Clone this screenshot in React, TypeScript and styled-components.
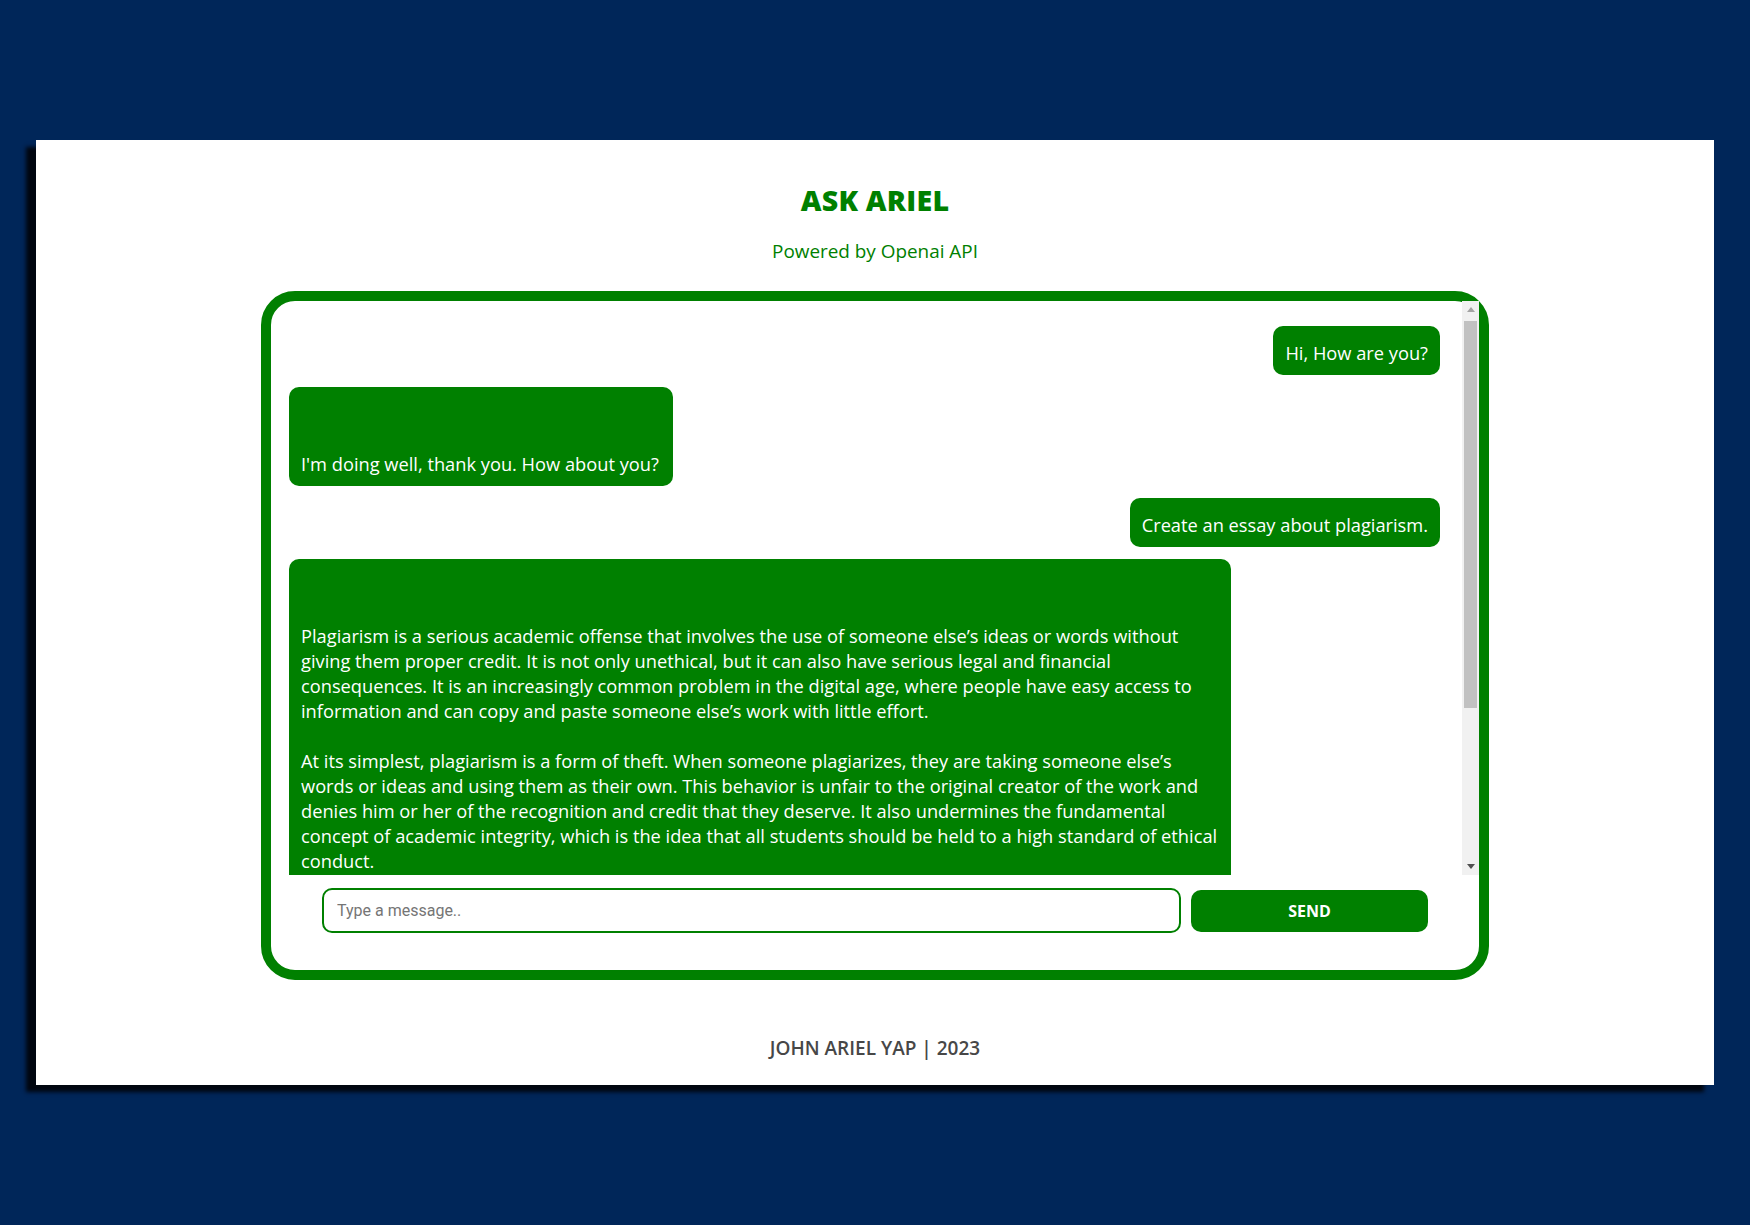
import React, { useCallback, useLayoutEffect, useRef, useState } from "react";
import styled, { createGlobalStyle } from "styled-components";

const GREEN = "#008000";

const GlobalStyle = createGlobalStyle`
  * { box-sizing: border-box; }
  html, body { margin: 0; padding: 0; }
  body {
    background: #002659;
    font-family: "Open Sans", "Noto Sans", sans-serif;
  }
`;

const Page = styled.div`
  min-height: 1225px;
  padding: 140px 36px 0 36px;
`;

const Sheet = styled.main`
  background: #ffffff;
  box-shadow: -10px 7px 4px rgba(0, 4, 12, 0.95);
  display: flex;
  flex-direction: column;
  align-items: center;
  padding: 42px 0 25px 0;
`;

const Title = styled.h1`
  margin: 0;
  font-family: "Open Sans", sans-serif;
  font-weight: 800;
  font-size: 28.6px;
  line-height: 36px;
  color: ${GREEN};
  letter-spacing: 0.2px;
`;

const Subtitle = styled.p`
  margin: 21px 0 0 0;
  font-size: 18.9px;
  line-height: 24px;
  color: ${GREEN};
`;

const ChatBox = styled.section`
  margin-top: 28px;
  width: 1228px;
  height: 689px;
  border: 10px solid ${GREEN};
  border-radius: 34px;
  display: flex;
  flex-direction: column;
`;

const ListRow = styled.div`
  display: flex;
  height: 574px;
  flex: none;
`;

const MessageList = styled.div`
  flex: 1;
  min-width: 0;
  overflow-y: auto;
  display: flex;
  flex-direction: column;
  gap: 12px;
  padding: 25px 22px 12px 18px;
  scrollbar-width: none;
  &::-webkit-scrollbar {
    display: none;
  }
`;

const ScrollTrack = styled.div`
  width: 17px;
  flex: none;
  background: #f1f1f1;
  display: flex;
  flex-direction: column;
`;

const ScrollArrow = styled.div<{ $dir: "up" | "down" }>`
  height: 17px;
  flex: none;
  display: flex;
  align-items: center;
  justify-content: center;
  &::before {
    content: "";
    width: 0;
    height: 0;
    border-left: 4.5px solid transparent;
    border-right: 4.5px solid transparent;
    ${(p) =>
      p.$dir === "up"
        ? "border-bottom: 5px solid #a3a3a3;"
        : "border-top: 5px solid #505050;"}
  }
`;

const ThumbLane = styled.div`
  flex: 1;
  position: relative;
`;

const Thumb = styled.div`
  position: absolute;
  left: 2px;
  right: 2px;
  background: #c1c1c1;
`;

const Bubble = styled.div<{ $from: "user" | "bot" }>`
  align-self: ${(p) => (p.$from === "user" ? "flex-end" : "flex-start")};
  flex: none;
  max-width: 82%;
  background: ${GREEN};
  color: #ffffff;
  border-radius: 10px;
  padding: 14px ${(p) => (p.$from === "bot" ? "14px" : "12px")} 10px 12px;
  font-family: "Open Sans", sans-serif;
  font-size: 18.25px;
  line-height: 25px;
  white-space: pre;
`;

const Composer = styled.form`
  display: flex;
  align-items: center;
  gap: 10px;
  padding: 13px 51px 0 51px;
`;

const MessageInput = styled.input`
  flex: 1;
  height: 45px;
  border: 2px solid ${GREEN};
  border-radius: 10px;
  padding: 0 13px;
  font-family: Roboto, "Liberation Sans", sans-serif;
  font-size: 16px;
  color: #222;
  outline: none;
  &::placeholder {
    color: #757575;
  }
`;

const SendButton = styled.button`
  width: 237px;
  height: 42px;
  border: none;
  border-radius: 10px;
  background: ${GREEN};
  color: #ffffff;
  font-family: "Open Sans", sans-serif;
  font-weight: 700;
  font-size: 16px;
  cursor: pointer;
`;

const Footer = styled.footer`
  margin-top: 56px;
  font-family: "Open Sans", sans-serif;
  font-weight: 600;
  font-size: 19px;
  line-height: 24px;
  color: #474747;
`;

const essay = [
  "",
  "",
  "Plagiarism is a serious academic offense that involves the use of someone else\u2019s ideas or words without",
  "giving them proper credit. It is not only unethical, but it can also have serious legal and financial",
  "consequences. It is an increasingly common problem in the digital age, where people have easy access to",
  "information and can copy and paste someone else\u2019s work with little effort.",
  "",
  "At its simplest, plagiarism is a form of theft. When someone plagiarizes, they are taking someone else\u2019s",
  "words or ideas and using them as their own. This behavior is unfair to the original creator of the work and",
  "denies him or her of the recognition and credit that they deserve. It also undermines the fundamental",
  "concept of academic integrity, which is the idea that all students should be held to a high standard of ethical",
  "conduct.",
  "",
  "Plagiarism can take many forms, from copying a few sentences without citation to submitting an entire",
  "paper written by someone else. Students who are caught plagiarizing may face serious consequences,",
  "including failing grades, suspension, or even expulsion, and their reputation may suffer for years.",
  "",
  "In conclusion, plagiarism is a serious offense that should be avoided at all costs. Students should",
  "always cite their sources and give credit where credit is due, so that the work of others is respected",
  "and the value of their own education is preserved.",
].join("\n");

type Message = { from: "user" | "bot"; text: string };

const messages: Message[] = [
  { from: "user", text: "Hi, How are you?" },
  { from: "bot", text: "\n\nI'm doing well, thank you. How about you?" },
  { from: "user", text: "Create an essay about plagiarism." },
  { from: "bot", text: essay },
];

export default function App() {
  const listRef = useRef<HTMLDivElement>(null);
  const laneRef = useRef<HTMLDivElement>(null);
  const [thumb, setThumb] = useState({ top: 0, height: 0 });

  const measure = useCallback(() => {
    const list = listRef.current;
    const lane = laneRef.current;
    if (!list || !lane) return;
    const laneH = lane.clientHeight;
    const ratio = list.clientHeight / list.scrollHeight;
    const height = Math.min(laneH, Math.max(20, laneH * ratio));
    const maxScroll = list.scrollHeight - list.clientHeight;
    const top = maxScroll > 0 ? (list.scrollTop / maxScroll) * (laneH - height) : 0;
    setThumb({ top, height });
  }, []);

  useLayoutEffect(() => {
    measure();
  }, [measure]);

  return (
    <>
      <GlobalStyle />
      <Page>
        <Sheet>
          <Title>ASK ARIEL</Title>
          <Subtitle>Powered by Openai API</Subtitle>
          <ChatBox>
            <ListRow>
              <MessageList ref={listRef} onScroll={measure}>
                {messages.map((m, i) => (
                  <Bubble key={i} $from={m.from}>
                    {m.text}
                  </Bubble>
                ))}
              </MessageList>
              <ScrollTrack>
                <ScrollArrow $dir="up" />
                <ThumbLane ref={laneRef}>
                  <Thumb style={{ top: thumb.top + 3, height: Math.max(0, thumb.height - 3) }} />
                </ThumbLane>
                <ScrollArrow $dir="down" />
              </ScrollTrack>
            </ListRow>
            <Composer onSubmit={(e) => e.preventDefault()}>
              <MessageInput type="text" placeholder="Type a message.." />
              <SendButton type="submit">SEND</SendButton>
            </Composer>
          </ChatBox>
          <Footer>JOHN ARIEL YAP | 2023</Footer>
        </Sheet>
      </Page>
    </>
  );
}
